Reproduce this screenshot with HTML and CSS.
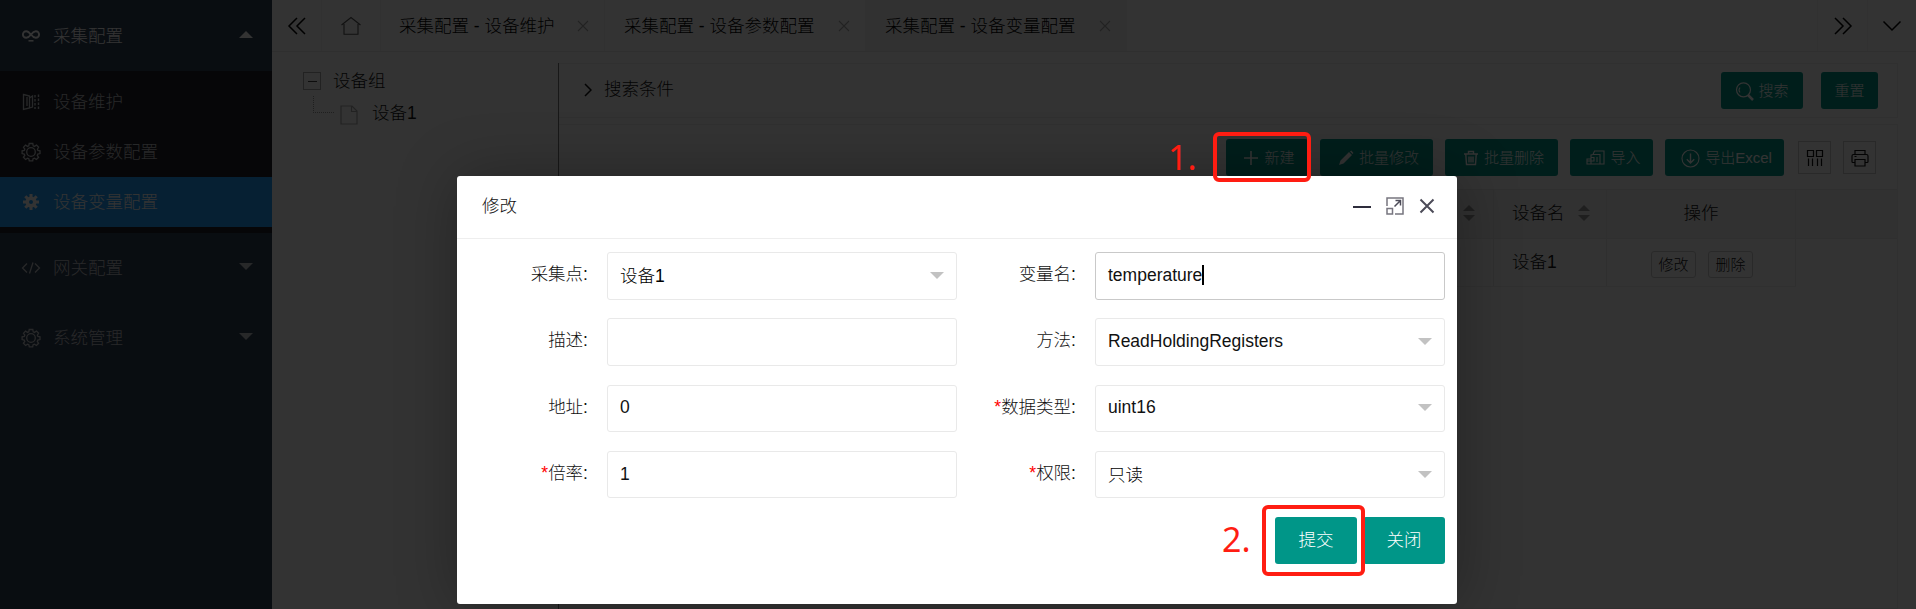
FILE: index.html
```html
<!DOCTYPE html>
<html lang="zh-CN">
<head>
<meta charset="utf-8">
<title>采集配置 - 设备变量配置</title>
<link rel="stylesheet" href="styles.css">
</head>
<body>
<svg class="defs" width="0" height="0">
  <symbol id="gear" viewBox="0 0 20 20"><path d="M8.2 1.5h3.6l.4 2.3 1.3.6 2-1.4 2.1 2.2-1.2 2 .5 1.2 2.1.4v2.8l-2.2.5-.5 1.3 1.3 1.9-2.2 2.2-1.9-1.3-1.4.5-.4 2.2H8.3l-.5-2.2-1.3-.5-1.9 1.3-2.2-2.2 1.4-1.9-.6-1.3-2.1-.5V8.800l2.200-.4.5-1.300-1.300-1.900L4.500 3l2 1.400 1.300-.6z" fill="none" stroke="currentColor" stroke-width="1.300"/><circle cx="10" cy="10" r="4.300" fill="none" stroke="currentColor" stroke-width="1.300"/></symbol>
  <symbol id="x" viewBox="0 0 12 12"><path d="M1 1l10 10M11 1L1 11" fill="none" stroke="currentColor" stroke-width="1.100"/></symbol>
</svg>
<div class="app">
  <nav class="side">
    <div class="side-item open">
      <svg class="ico" viewBox="0 0 20 20"><path d="M10 9C8 5.800 6.800 5.200 5.200 5.200a3.300 3.300 0 0 0 0 6.600C6.800 11.800 8 11.200 10 8.500 12 5.800 13.200 5.200 14.800 5.200a3.300 3.300 0 0 1 0 6.600C13.200 11.800 12 11.200 10 8.500" fill="none" stroke="currentColor" stroke-width="1.900"/><path d="M7.500 14.800h5" stroke="currentColor" stroke-width="1.500"/></svg>
      <span>采集配置</span><i class="caret up"></i>
    </div>
    <div class="side-sub">
      <div class="sub-item">
        <svg class="ico" viewBox="0 0 20 20"><path d="M2.500 2.500l6 1.500v12l-6 1.500zM6 5v9M8.500 6l3-2v11l-3 1" fill="none" stroke="currentColor" stroke-width="1.300"/><path d="M14 3v14M17.500 2.500v15" fill="none" stroke="currentColor" stroke-width="1.400" stroke-dasharray="2.500 1.500"/></svg>
        <span>设备维护</span>
      </div>
      <div class="sub-item"><svg class="ico"><use href="#gear"/></svg><span>设备参数配置</span></div>
      <div class="sub-item active">
        <svg class="ico" viewBox="0 0 20 20"><path d="M10 2v16M2 10h16M4.300 4.300l11.400 11.400M15.700 4.300L4.300 15.700" stroke="currentColor" stroke-width="3"/><circle cx="10" cy="10" r="4.500" fill="currentColor" stroke="currentColor" stroke-width="2"/><circle class="hub" cx="10" cy="10" r="2"/></svg>
        <span>设备变量配置</span>
      </div>
    </div>
    <div class="side-item">
      <svg class="ico" viewBox="0 0 20 20"><path d="M6 5.500L1.500 10 6 14.500M14 5.500l4.500 4.500-4.500 4.500M12 4.500L8.500 15.500" fill="none" stroke="currentColor" stroke-width="1.300"/></svg>
      <span>网关配置</span><i class="caret"></i>
    </div>
    <div class="side-item"><svg class="ico"><use href="#gear"/></svg><span>系统管理</span><i class="caret"></i></div>
  </nav>
  <div class="main">
    <div class="tabs">
      <div class="tab-ctl"><svg width="20" height="18" viewBox="0 0 20 18"><path d="M10 1L2 9l8 8M18 1l-8 8 8 8" fill="none" stroke="currentColor" stroke-width="1.500"/></svg></div>
      <div class="tab-ctl home"><svg width="20" height="20" viewBox="0 0 20 20"><path d="M.5 9L10 1.500 19.500 9M3 8v10.300h14V8" fill="none" stroke="currentColor" stroke-width="1.100"/></svg></div>
      <div class="tab w1"><span>采集配置 - 设备维护</span><svg class="tx"><use href="#x"/></svg></div>
      <div class="tab w2"><span>采集配置 - 设备参数配置</span><svg class="tx"><use href="#x"/></svg></div>
      <div class="tab w2 current"><span>采集配置 - 设备变量配置</span><svg class="tx"><use href="#x"/></svg></div>
      <div class="tab-ctl push"><svg width="20" height="18" viewBox="0 0 20 18"><path d="M2 1l8 8-8 8M10 1l8 8-8 8" fill="none" stroke="currentColor" stroke-width="1.500"/></svg></div>
      <div class="tab-ctl last"><svg width="20" height="12" viewBox="0 0 20 12"><path d="M1.500 1.500L10 10l8.500-8.500" fill="none" stroke="currentColor" stroke-width="1.500"/></svg></div>
    </div>
    <div class="body">
      <div class="tree">
        <div class="node"><i class="minus"></i><span>设备组</span></div>
        <div class="node child"><i class="branch"></i>
          <svg width="18" height="20" viewBox="0 0 18 20"><path d="M1 1h11l5 5v13H1zM11.500 1v5.500H17" fill="none" stroke="currentColor" stroke-width="1.200"/></svg>
          <span>设备1</span></div>
      </div>
      <div class="content">
        <div class="search">
          <svg class="chev" width="8" height="14" viewBox="0 0 8 14"><path d="M1 1l6 6-6 6" fill="none" stroke="currentColor" stroke-width="1.500"/></svg>
          <span class="search-title">搜索条件</span>
          <div class="btn b-search"><svg width="19" height="19" viewBox="0 0 19 19"><g fill="none" stroke="currentColor"><circle cx="8.500" cy="7.800" r="7" stroke-width="1.200"/><path d="M5 5.500a4 4 0 0 0 0 5" stroke-width="1.100"/><path d="M13 13l5 5" stroke-width="2.500"/></g></svg>搜索</div>
          <div class="btn b-reset">重置</div>
        </div>
        <div class="grid-card">
          <div class="toolbar">
            <div class="btn t1"><svg width="16" height="16" viewBox="0 0 16 16"><path d="M8 1v14M1 8h14" stroke="currentColor" stroke-width="1.600"/></svg>新建</div>
            <div class="btn t2"><svg width="16" height="16" viewBox="0 0 16 16"><path d="M1 15l1.500-4.500L11 2l3 3-8.500 8.500zM12 1.500L13.200.5 15.500 3l-1 1z" fill="currentColor"/></svg>批量修改</div>
            <div class="btn t2"><svg width="16" height="16" viewBox="0 0 16 16"><path d="M1 4h14M5.500 3.500v-2h5v2M2.800 4.500l.7 10h9l.7-10M6 6.500v6M8 6.500v6M10 6.500v6" fill="none" stroke="currentColor" stroke-width="1.400"/></svg>批量删除</div>
            <div class="btn t3"><svg width="19" height="16" viewBox="0 0 19 16"><path d="M7 4.500L8.500 1H18v13H8M7 4.500h7V14H1V9h4V5zM1 11h7V7.500H4.500M5 9v5M11 7v5" fill="none" stroke="currentColor" stroke-width="1.100"/></svg>导入</div>
            <div class="btn t4"><svg width="19" height="19" viewBox="0 0 19 19"><g fill="none" stroke="currentColor"><circle cx="9.500" cy="9.500" r="8.500" stroke-width="1.100"/><path d="M9.500 4.500v9.500M5.800 10.300l3.700 3.700 3.700-3.700" stroke-width="1.400"/></g></svg>导出Excel</div>
            <div class="tool"><svg width="18" height="18" viewBox="0 0 18 18"><path d="M1.500 1.500h6v6h-6zM10.500 1.500h6v6h-6zM2.500 9.500v7.500M6.500 9.500v7.500M11.500 9.500v7.500M15.500 9.500v7.500" fill="none" stroke="currentColor" stroke-width="1.200"/></svg></div>
            <div class="tool second"><svg width="18" height="18" viewBox="0 0 18 18"><path d="M4 5V1.500h10V5M4 13.500H1.800Q1 13.500 1 12.500V7Q1 5.500 2.500 5.500h13Q17 5.500 17 7v5.500q0 1-.8 1H14M4 10.500h10v6.500H4zM3.500 7.500h2" fill="none" stroke="currentColor" stroke-width="1.200"/></svg></div>
          </div>
          <div class="row head">
            <div class="cell c1"><i class="sort"></i></div>
            <div class="cell c2"><span>设备名</span><i class="sort"></i></div>
            <div class="cell c3">操作</div>
          </div>
          <div class="row">
            <div class="cell c1"></div>
            <div class="cell c2">设备1</div>
            <div class="cell c3"><span class="mini">修改</span><span class="mini">删除</span></div>
          </div>
        </div>
      </div>
    </div>
  </div>
</div>
<div class="shade"></div>
<div class="dialog">
  <div class="dlg-head"><span class="dlg-title">修改</span>
    <svg width="18" height="18" viewBox="0 0 18 18"><path d="M0 10h18" stroke="#2e2d3c" stroke-width="2"/></svg>
    <svg class="max" width="18" height="18" viewBox="0 0 18 18"><g fill="none" stroke="#77757f"><path d="M1 9V1h16v16H9" stroke-width="1.500"/><path d="M1 11.500h5.500V17H1z" stroke-width="1.500"/><path d="M8.500 9.500l6-6M9.500 3.500h5v5" stroke="#4c4b58" stroke-width="1.500"/></g></svg>
    <svg class="close" width="16" height="16" viewBox="0 0 16 16"><path d="M1.500 1.500l13 13M14.500 1.500l-13 13" stroke="#4c4b58" stroke-width="2"/></svg>
  </div>
  <div class="form">
    <label>采集点:</label><div class="field select low">设备1</div>
    <label>变量名:</label><div class="field focus">temperature<i class="cursor"></i></div>
    <label>描述:</label><div class="field"></div>
    <label>方法:</label><div class="field select">ReadHoldingRegisters</div>
    <label>地址:</label><div class="field">0</div>
    <label><b>*</b>数据类型:</label><div class="field select">uint16</div>
    <label><b>*</b>倍率:</label><div class="field">1</div>
    <label><b>*</b>权限:</label><div class="field select low">只读</div>
  </div>
  <div class="actions"><div class="abtn">提交</div><div class="abtn">关闭</div></div>
</div>
<div class="mark box1"></div><div class="mark box2"></div>
<div class="num n1">1.</div><div class="num n2">2.</div>
</body>
</html>
```

FILE: styles.css
```css
* { box-sizing: border-box; }
body {
  margin: 0; width: 1916px; height: 609px; overflow: hidden; position: relative;
  font: 300 17.5px/30px "Liberation Sans", "Noto Sans CJK SC", sans-serif;
  color: #111; background: #fff;
}
svg { flex: none; display: block; }
span, label, .btn, .cell, .abtn { white-space: nowrap; }
.defs { position: absolute; }
.app { display: flex; height: 609px; }

.side { width: 272px; flex: none; background: #2f4056; color: #c4c6ca; }
.side-item, .sub-item { display: flex; align-items: center; height: 70px; padding-left: 21px; }
.side-item.open { height: 71px; color: #fff; }
.side-sub { background: #20222a; padding: 6px 0; }
.sub-item { height: 50px; }
.sub-item.active { background: #1e9fff; color: #fff; }
.ico { width: 20px; height: 20px; margin-right: 12px; }
.hub { fill: #1e9fff; }
.caret { margin: -3px 19px 0 auto; border: 7.500px solid transparent; border-bottom-width: 0; border-top-color: currentColor; }
.caret.up { border-bottom: 7.500px solid currentColor; border-top-width: 0; }

.main { flex: 1; display: flex; flex-direction: column; }
.tabs { display: flex; height: 52px; border-bottom: 1px solid #ebebeb; color: #000; }
.tab-ctl { width: 50px; border-right: 1px solid #f2f2f2; display: flex; align-items: center; justify-content: center; }
.tab-ctl.home { width: 59px; color: #555; }
.tab-ctl.push { margin-left: auto; width: 51px; border-left: 1px solid #f2f2f2; }
.tab-ctl.last { width: 48px; border: 0; }
.tab { display: flex; align-items: center; padding: 1px 15px 0 18px; border-right: 1px solid #f2f2f2; }
.tab.w1 { width: 224px; }
.tab.w2 { width: 261px; padding-left: 19px; }
.tab.current { background: #f4f4f4; }
.tx { width: 12px; height: 12px; margin-left: auto; color: #aaa; }

.body { display: flex; flex: 1; padding-top: 11px; }
.tree { width: 287px; border-right: 1px solid #777; padding: 2px 0 0 31px; }
.node { display: flex; align-items: center; height: 32px; }
.node span { margin-left: -1px; padding-bottom: 1px; }
.minus { width: 18px; height: 18px; border: 1px solid #aaa; margin-right: 13px; display: flex; align-items: center; justify-content: center; }
.minus::after { content: ""; width: 9px; height: 1px; background: #444; }
.child svg { color: #aaa; margin: 3px 15px 0 6px; }
.branch { width: 21px; height: 17px; margin: -17px 0 0 10px; border: 1px dotted #999; border-width: 0 0 1px 1px; }

.content { width: 1339px; display: flex; flex-direction: column; gap: 6px; }
.search { height: 55px; border: 1px solid #eee; border-left: 0; display: flex; align-items: center; padding-right: 19px; }
.chev { margin: 0 0 2px 25px; color: #111; }
.search-title { margin: 0 auto 3px 12px; }
.btn { height: 37px; border-radius: 3px; background: #009688; color: #fff; font-size: 15px; display: flex; align-items: center; justify-content: center; gap: 4px; padding-top: 1px; }
.b-search { width: 82px; margin-right: 18px; }
.b-reset { width: 57px; }
.grid-card { flex: 1; border: 1px solid #eee; border-left: 0; }
.toolbar { display: flex; align-items: center; justify-content: flex-end; height: 64px; padding: 1px 21px 0 0; }
.toolbar .btn { margin-right: 12px; gap: 5px; padding-left: 4px; }
.t1 { width: 82px; }
.t2 { width: 113px; }
.t3 { width: 83px; }
.toolbar .t4 { width: 119px; margin-right: 14px; }
.tool { width: 33px; height: 33px; border: 1px solid #ccc; display: flex; align-items: center; justify-content: center; }
.tool.second { margin-left: 12px; }
.row { display: flex; height: 48px; width: 1237px; border-bottom: 1px solid #eee; }
.row.head { width: auto; height: 50px; background: #f2f2f2; border: 1px solid #eaeaea; border-width: 1px 0; }
.cell { display: flex; align-items: center; border-right: 1px solid #ececec; padding-bottom: 2px; }
.c1 { width: 935px; justify-content: flex-end; padding-right: 18px; }
.c2 { width: 113px; padding-left: 18px; }
.c3 { width: 189px; justify-content: center; gap: 12px; }
.sort { width: 12px; height: 16px; display: flex; flex-direction: column; justify-content: space-between; }
.sort::before { content: ""; border: 6px solid transparent; border-top: 0; border-bottom-color: #999; }
.sort::after { content: ""; border: 6px solid transparent; border-bottom: 0; border-top-color: #999; }
.c2 .sort { margin-left: 13px; }
.mini { width: 45px; height: 27px; margin: 5px -1px 0 1px; border: 1px solid #ccc; border-radius: 3px; font-size: 15px; line-height: 26px; text-align: center; }

.shade { position: absolute; inset: 0; background: rgba(0, 0, 0, .8); }
.dialog { position: absolute; left: 457px; top: 176px; width: 1000px; height: 428px; background: #fff; border-radius: 3px; box-shadow: 1px 1px 62px rgba(0, 0, 0, .3); }
.dlg-head { height: 63px; border-bottom: 1px solid #eee; display: flex; align-items: center; padding: 0 22px 2px 25px; }
.dlg-title { margin-right: auto; }
.max { margin: 0 15px; }
.form { display: grid; grid-template-columns: 131px 369px 119px 369px; grid-auto-rows: 47.500px; row-gap: 18.750px; padding-top: 13px; }
.form label { padding: 7px 0 0; text-align: right; }
.form label b { color: #f00; font-weight: 400; }
.field { margin-left: 19px; border: 1px solid #e9e9e9; border-radius: 3px; padding: 0 12px 2px; display: flex; align-items: center; color: #111; font-weight: 400; }
.field.low { padding-bottom: 0; font-weight: 300; color: #000; }
.field.focus { border-color: #c9c9c9; }
.cursor { width: 2px; height: 20px; background: #000; }
.select::after { content: ""; margin-left: auto; border: 7.500px solid transparent; border-bottom: 0; border-top-color: #c2c2c2; }
.actions { display: flex; justify-content: flex-end; gap: 6px; padding: 18.750px 12px 0 0; }
.abtn { width: 82px; height: 47px; border-radius: 3px; background: #009688; color: #fff; line-height: 46px; text-align: center; }

.mark { position: absolute; border: 4px solid #ff1d12; border-radius: 6px; }
.box1 { left: 1213px; top: 132px; width: 98px; height: 50px; }
.box2 { left: 1262px; top: 505px; width: 103px; height: 71px; }
.num { position: absolute; font: 400 34px/40px "Noto Sans", sans-serif; color: #ff1d12; }
.n1 { left: 1168px; top: 137px; }
.n2 { left: 1222px; top: 519px; }
```
